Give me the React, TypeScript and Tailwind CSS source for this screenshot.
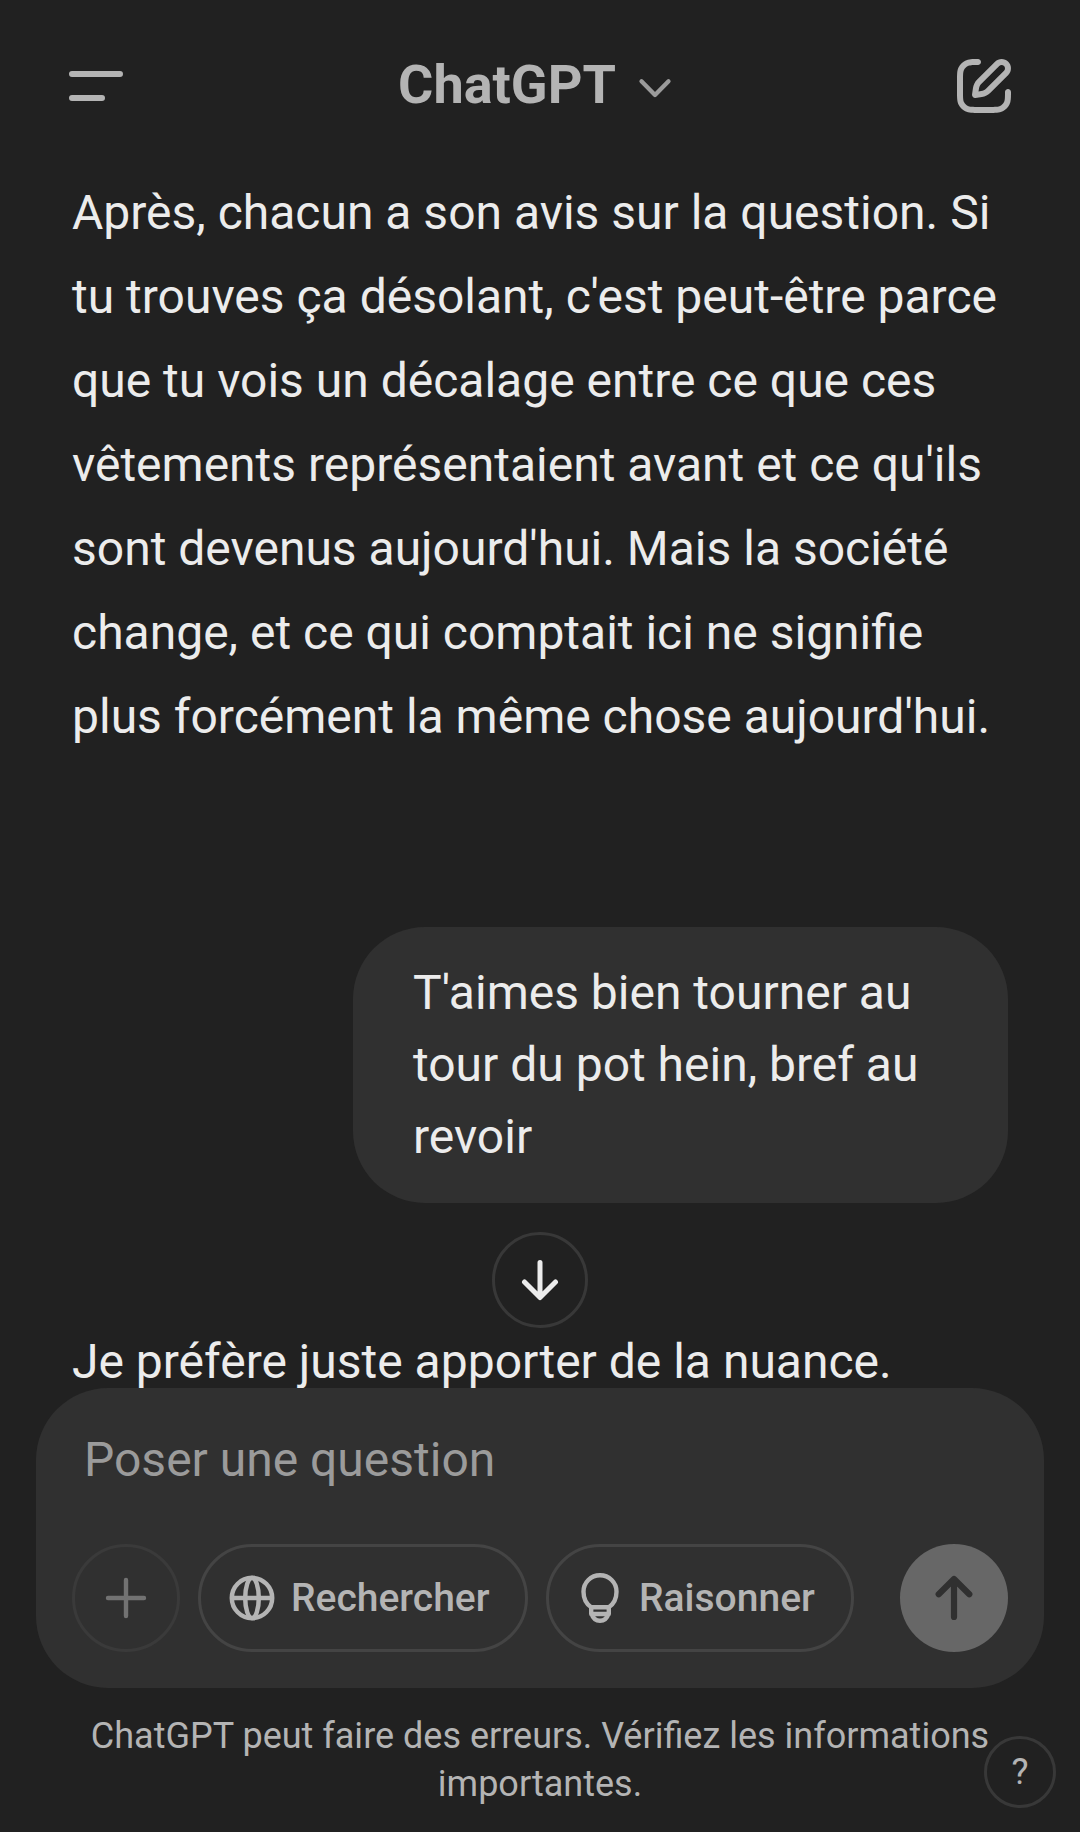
import * as React from 'react';

interface IconProps {
  className?: string;
}

const MenuIcon = ({ className }: IconProps) => (
  <svg className={className} viewBox="0 0 24 24" fill="none" stroke="currentColor" strokeWidth={2} strokeLinecap="round">
    <path d="M4 8h16M4 16h10" />
  </svg>
);

const ChevronIcon = ({ className }: IconProps) => (
  <svg className={className} viewBox="0 0 24 24" fill="none" stroke="currentColor" strokeWidth={1.9} strokeLinecap="round" strokeLinejoin="round">
    <path d="M6 9l6 6.1L18 9" />
  </svg>
);

const ComposeIcon = ({ className }: IconProps) => (
  <svg className={className} viewBox="0 0 24 24" fill="currentColor">
    <path d="M15.6729 3.91287C16.8918 2.69392 18.8682 2.69392 20.0871 3.91287C21.3061 5.13182 21.3061 7.10813 20.0871 8.32708L14.1499 14.2643C13.3849 15.0293 12.3925 15.5255 11.3215 15.6785L9.14142 15.9899C8.82983 16.0344 8.51546 15.9297 8.29289 15.7071C8.07033 15.4845 7.96554 15.1701 8.01005 14.8586L8.32149 12.6785C8.47449 11.6075 8.97072 10.615 9.7357 9.85006L15.6729 3.91287ZM18.6729 5.32708C18.235 4.88918 17.525 4.88918 17.0871 5.32708L11.1499 11.2643C10.6909 11.7233 10.3932 12.3187 10.3014 12.9613L10.1785 13.8215L11.0386 13.6986C11.6812 13.6068 12.2767 13.3091 12.7357 12.8501L18.6729 6.91287C19.1108 6.47497 19.1108 5.76499 18.6729 5.32708ZM11 3.99929C11.0004 4.55157 10.5531 4.99963 10.0008 5.00007C9.00227 5.00084 8.29769 5.00827 7.74651 5.06064C7.20685 5.11191 6.88488 5.20117 6.63803 5.32695C6.07354 5.61457 5.6146 6.07351 5.32698 6.63799C5.19279 6.90135 5.10062 7.24904 5.05118 7.8542C5.00078 8.47105 5 9.26336 5 10.4V13.6C5 14.7366 5.00078 15.5289 5.05118 16.1457C5.10062 16.7509 5.19279 17.0986 5.32698 17.3619C5.6146 17.9264 6.07354 18.3854 6.63803 18.673C6.90138 18.8072 7.24907 18.8993 7.85424 18.9488C8.47108 18.9992 9.26339 19 10.4 19H13.6C14.7366 19 15.5289 18.9992 16.1458 18.9488C16.7509 18.8993 17.0986 18.8072 17.362 18.673C17.9265 18.3854 18.3854 17.9264 18.673 17.3619C18.7988 17.1151 18.8881 16.7931 18.9393 16.2535C18.9917 15.7023 18.9991 14.9977 18.9999 13.9992C19.0003 13.4469 19.4484 12.9995 20.0007 13C20.553 13.0004 21.0003 13.4485 20.9999 14.0007C20.9991 14.9789 20.9932 15.7808 20.9304 16.4426C20.8664 17.116 20.7385 17.7136 20.455 18.2699C19.9757 19.2107 19.2108 19.9756 18.27 20.455C17.6777 20.7568 17.0375 20.8826 16.3086 20.9421C15.6008 21 14.7266 21 13.6428 21H10.3572C9.27339 21 8.39925 21 7.69138 20.9421C6.96253 20.8826 6.32234 20.7568 5.73005 20.455C4.78924 19.9756 4.02433 19.2107 3.54497 18.2699C3.24318 17.6776 3.11737 17.0374 3.05782 16.3086C2.99998 15.6007 2.99999 14.7266 3 13.6428V10.3572C2.99999 9.27337 2.99998 8.39922 3.05782 7.69134C3.11737 6.96249 3.24318 6.3223 3.54497 5.73001C4.02433 4.7892 4.78924 4.0243 5.73005 3.54493C6.28633 3.26149 6.88399 3.13358 7.55735 3.06961C8.21919 3.00673 9.02103 3.00083 9.99922 3.00007C10.5515 2.99964 10.9996 3.447 11 3.99929Z" />
  </svg>
);

const ArrowDownIcon = ({ className }: IconProps) => (
  <svg className={className} viewBox="0 0 60 60" fill="none" stroke="currentColor" strokeWidth={5} strokeLinecap="round" strokeLinejoin="round">
    <path d="M30 12.5v34M14.5 32L30 47.500l15.500-15.500" />
  </svg>
);

const ArrowUpIcon = ({ className }: IconProps) => (
  <svg className={className} viewBox="0 0 60 60" fill="none" stroke="currentColor" strokeWidth={6.2} strokeLinecap="round" strokeLinejoin="round">
    <path d="M30 49V11.5M14.7 26.2L30 11l15.3 15.2" />
  </svg>
);

const PlusIcon = ({ className }: IconProps) => (
  <svg className={className} viewBox="0 0 60 60" fill="none" stroke="currentColor" strokeWidth={4.4} strokeLinecap="round">
    <path d="M30 12v36M12 30h36" />
  </svg>
);

const GlobeIcon = ({ className }: IconProps) => (
  <svg className={className} viewBox="0 0 54 54" fill="none" stroke="currentColor" strokeWidth={4.5}>
    <circle cx="27" cy="27" r="20.2" />
    <ellipse cx="27" cy="27" rx="6.8" ry="20" />
    <path d="M7 27h40" />
  </svg>
);

const BulbIcon = ({ className }: IconProps) => (
  <svg className={className} viewBox="0 0 54 54" fill="none" stroke="currentColor" strokeWidth={4.4} strokeLinejoin="round">
    <path d="M18.2 36.200C13.200 32.800 10.500 27.500 10.500 20.700a16.500 16.500 0 0 1 33 0c0 6.800-2.700 12.100-7.700 15.500z" />
    <path d="M18.2 36v7h17.600v-7M18.600 43c1.600 4.800 4.400 6.800 8.400 6.800s6.800-2 8.400-6.800" />
  </svg>
);

interface ToolButtonProps {
  icon: React.ReactNode;
  label: string;
  className?: string;
}

const ToolButton = ({ icon, label, className = '' }: ToolButtonProps) => (
  <button className={`flex h-[108px] items-center gap-3 rounded-full border-3 border-[#444444] pl-6 text-[39px] font-medium text-[#b4b4b4] ${className}`}>
    {icon}
    {label}
  </button>
);

const answerLines = [
  'Après, chacun a son avis sur la question. Si',
  "tu trouves ça désolant, c'est peut-être parce",
  'que tu vois un décalage entre ce que ces',
  "vêtements représentaient avant et ce qu'ils",
  "sont devenus aujourd'hui. Mais la société",
  'change, et ce qui comptait ici ne signifie',
  "plus forcément la même chose aujourd'hui.",
];

export default function App() {
  return (
    <div className="flex h-[1832px] w-[1080px] flex-col overflow-hidden bg-[#212121] font-['Roboto',sans-serif] text-[48px] text-[#ececec]">
      {/* Header */}
      <header className="flex h-[171px] shrink-0 items-start justify-between px-[60px] pt-[50px] text-[#b4b4b4]">
        <button>
          <MenuIcon className="size-[72px]" />
        </button>
        <button className="-mt-[2px] flex h-[72px] items-center gap-3 text-[54px] font-bold">
          ChatGPT
          <ChevronIcon className="mt-[7px] size-[54px] text-[#9b9b9b]" />
        </button>
        <button>
          <ComposeIcon className="size-[72px]" />
        </button>
      </header>

      {/* Conversation */}
      <main className="flex h-[1217px] shrink-0 flex-col overflow-hidden px-[72px]">
        <p className="leading-[84px] whitespace-nowrap">
          {answerLines.map((line) => (
            <span key={line} className="block">{line}</span>
          ))}
        </p>
        <div className="mt-[168px] w-[655px] shrink-0 self-end rounded-[72px] bg-[#303030] px-[60px] py-[30px] leading-[72px]">
          T'aimes bien tourner au tour du pot hein, bref au revoir
        </div>
        <button className="mt-[29px] flex size-24 shrink-0 items-center justify-center self-center rounded-full border-3 border-[#383838]">
          <ArrowDownIcon className="size-[60px]" />
        </button>
        <p className="-mt-2 shrink-0 leading-[84px] whitespace-nowrap">Je préfère juste apporter de la nuance.</p>
      </main>

      {/* Composer */}
      <section className="mx-9 flex h-[300px] shrink-0 flex-col justify-between rounded-[72px] bg-[#303030] p-9">
        <div className="pl-3 leading-[72px] text-[#9b9b9b]">Poser une question</div>
        <div className="flex items-center">
          <button className="flex size-[108px] items-center justify-center rounded-full border-3 border-[#3a3a3a] text-[#727272]">
            <PlusIcon className="size-[60px]" />
          </button>
          <ToolButton className="ml-[18px] w-[330px]" icon={<GlobeIcon className="size-[54px]" />} label="Rechercher" />
          <ToolButton className="ml-[18px] w-[308px]" icon={<BulbIcon className="size-[54px]" />} label="Raisonner" />
          <button className="ml-auto flex size-[108px] items-center justify-center rounded-full bg-[#676767] text-[#303030]">
            <ArrowUpIcon className="size-[60px]" />
          </button>
        </div>
      </section>

      {/* Disclaimer and help */}
      <footer className="relative flex-1 pt-6 text-center text-[36px] leading-[48px] text-[#b4b4b4]">
        <p className="mx-auto w-[920px]">ChatGPT peut faire des erreurs. Vérifiez les informations importantes.</p>
        <button className="absolute top-12 right-6 flex size-[72px] items-center justify-center rounded-full border-3 border-[#383838] text-[36px]">
          ?
        </button>
      </footer>
    </div>
  );
}
